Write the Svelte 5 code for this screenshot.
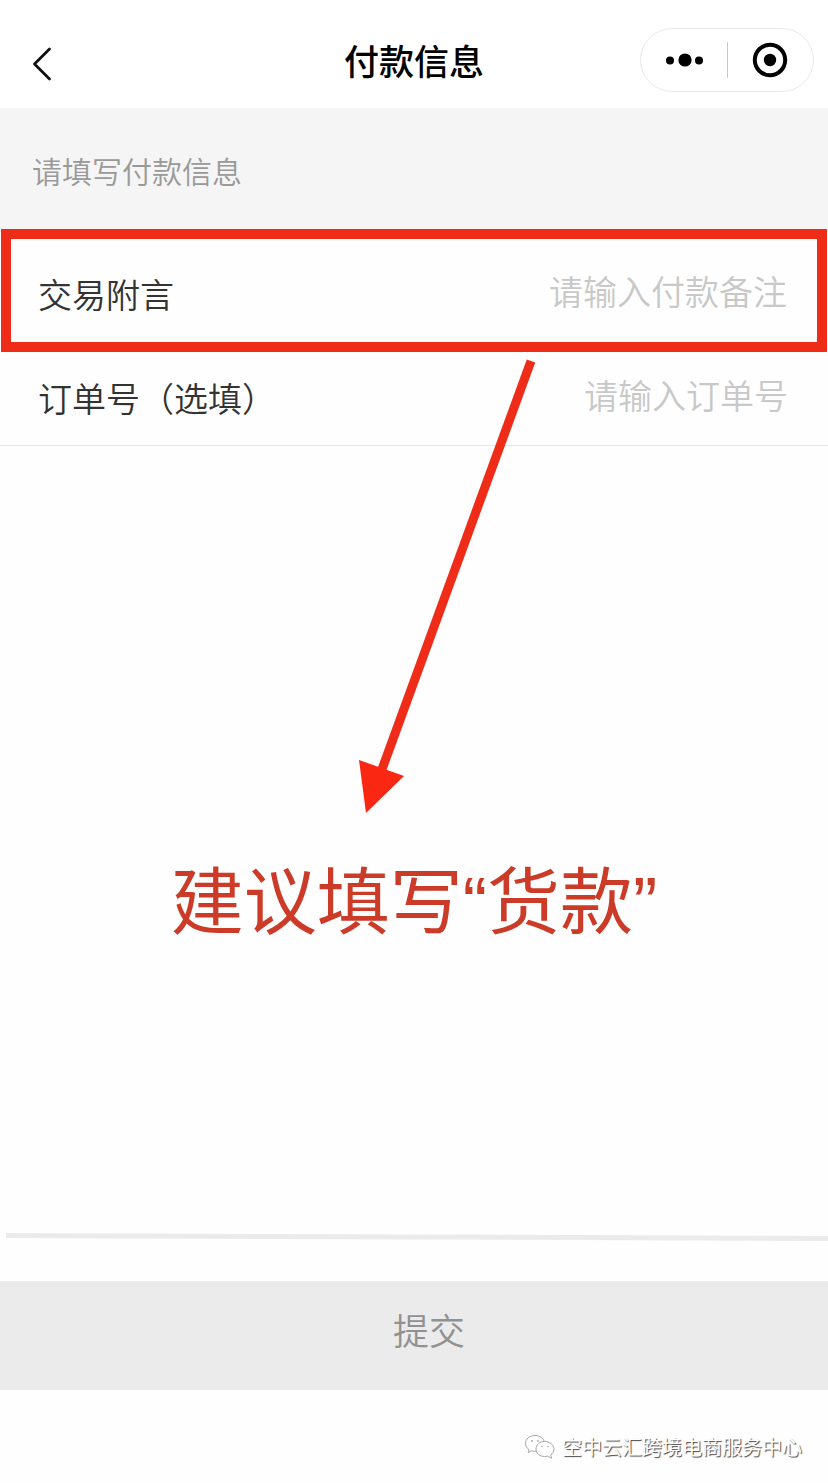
<!-- script -->
<script lang="ts">
  /* constants */
  const fields: { id: string, label: string, placeholder: string, marked: boolean }[] = [
    { id: 'remark', label: '交易附言', placeholder: '请输入付款备注', marked: true },
    { id: 'order', label: '订单号（选填）', placeholder: '请输入订单号', marked: false }
  ]
  /* state */
  let values: Record<string, string> = $state({ remark: '', order: '' })
</script>

<!-- template -->
<div class="page" lang="zh-CN">
  <header>
    <button class="back" type="button" aria-label="返回">
      <svg width="20" height="36" viewBox="0 0 20 36">
        <path d="M17.5 3L2.5 18L17.5 33" fill="none" stroke="#111" stroke-width="2.8" stroke-linecap="round" stroke-linejoin="round" />
      </svg>
    </button>
    <h1>付款信息</h1>
    <div class="capsule">
      <button type="button" aria-label="更多">
        <svg width="38" height="14" viewBox="0 0 38 14">
          <circle cx="5" cy="7.5" r="4" />
          <circle cx="20" cy="7" r="6.6" />
          <circle cx="34" cy="7.5" r="4" />
        </svg>
      </button>
      <span class="split"></span>
      <button type="button" aria-label="关闭">
        <svg width="36" height="36" viewBox="0 0 36 36">
          <circle cx="18" cy="18" r="15.2" fill="none" stroke="#000" stroke-width="4" />
          <circle cx="18" cy="18" r="6.2" />
        </svg>
      </button>
    </div>
  </header>

  <form>
    <p class="hint">请填写付款信息</p>
    {#each fields as field (field.id)}
      <div class="row" class:marked={field.marked}>
        <label for={field.id}>{field.label}</label>
        <input id={field.id} type="text" placeholder={field.placeholder} bind:value={values[field.id]} />
      </div>
    {/each}

    <div class="advice">
      <svg class="arrow" width="180" height="456" viewBox="0 0 180 456">
        <path d="M174 3L24 414" stroke="#ee2c18" stroke-width="9" />
        <path d="M2 402L47 418L9 455Z" fill="#fa2713" />
      </svg>
      <p>建议填写“货款”</p>
    </div>

    <svg class="rule" height="8" viewBox="0 0 822 8" preserveAspectRatio="none">
      <path d="M0 0L822 3V8L0 5Z" fill="#ebebeb" />
    </svg>
    <button class="submit" type="button">提交</button>
  </form>

  <footer>
    <svg width="32" height="26" viewBox="0 0 32 26" fill="#fff" stroke="#a8a8a8" stroke-width="1">
      <path d="M11 1.5C5.500 1.500 1.500 5 1.500 9.500C1.500 12 2.800 14.200 5 15.600L4.300 18.500L7.600 16.800C8.700 17.100 9.800 17.300 11 17.300C16.500 17.300 20.500 13.800 20.500 9.500C20.500 5 16.500 1.500 11 1.500Z" />
      <path d="M20.500 7.500C15.500 7.500 12 10.800 12 15C12 19.200 15.500 22.500 20.500 22.500C21.600 22.500 22.600 22.400 23.500 22.100L27.500 24.300L26.700 21C28.800 19.600 30 17.500 30 15C30 10.800 25.500 7.500 20.500 7.500Z" />
      <g fill="#a8a8a8" stroke="none">
        <circle cx="8" cy="7" r="0.9" />
        <circle cx="14" cy="7" r="0.9" />
        <circle cx="18" cy="12.500" r="0.8" />
        <circle cx="24" cy="12.500" r="0.8" />
      </g>
    </svg>
    <span>空中云汇跨境电商服务中心</span>
  </footer>
</div>

<!-- style -->
<style>
  :global(body) {
    margin: 0;
    background-color: #fff;
  }
  .page {
    /* flex */
    display: flex;
    flex-direction: column;
    /* size */
    min-height: 100vh;
    /* fonts */
    font-family: "Noto Sans CJK SC", sans-serif;
    /* color */
    background-color: #fefefe;
  }
  h1, p {
    margin: 0;
  }
  button {
    /* reset */
    padding: 0;
    border: none;
    background: none;
    font-family: inherit;
    /* flex */
    display: flex;
    align-items: center;
    justify-content: center;
  }
  header {
    /* grid */
    display: grid;
    grid-template-columns: 1fr auto 1fr;
    align-items: center;
    /* size */
    box-sizing: border-box;
    padding: 28px 14px 16px;
    /* color */
    background-color: #fff;
  }
  .back {
    justify-self: start;
    padding: 8px 18px 0;
  }
  h1 {
    /* fonts */
    font-size: 35px;
    line-height: 64px;
    font-weight: 500;
    /* color */
    color: #000;
  }
  .capsule {
    /* flex */
    display: flex;
    align-items: center;
    justify-self: end;
    /* size */
    box-sizing: border-box;
    width: 174px;
    height: 64px;
    /* color */
    border: 1px solid #e9e9e9;
    border-radius: 32px;
  }
  .capsule button {
    flex: 1;
  }
  .split {
    width: 1px;
    height: 36px;
    background-color: #c8c8c8;
  }
  form {
    /* flex */
    display: flex;
    flex-direction: column;
    flex: 1;
  }
  .hint {
    /* margins */
    padding: 40px 32px 37px;
    /* fonts */
    font-size: 30px;
    line-height: 44px;
    font-weight: 350;
    /* color */
    color: #999;
    background-color: #f5f5f5;
  }
  .row {
    /* flex */
    display: flex;
    align-items: center;
    justify-content: space-between;
    /* margins */
    padding: 20px 40px 25px 38px;
    /* color */
    border-bottom: 1px solid #e6e6e6;
  }
  .row.marked {
    /* margins */
    margin: 0 1px;
    padding: 29px 30px 26px 27px;
    /* color */
    border: 10px solid #ee2c18;
  }
  label {
    /* margins */
    padding-top: 4px;
    /* fonts */
    font-size: 34px;
    line-height: 44px;
    font-weight: 350;
    /* color */
    color: #333;
    white-space: nowrap;
  }
  input {
    /* size */
    box-sizing: border-box;
    flex: 1;
    min-width: 0;
    height: 48px;
    padding: 0 0 4px;
    /* fonts */
    font-family: inherit;
    font-size: 34px;
    font-weight: 350;
    text-align: right;
    /* color */
    color: #333;
    border: none;
    outline: none;
    background: none;
  }
  input::placeholder {
    color: #c8c8c8;
    opacity: 1;
  }
  .advice {
    /* position */
    position: relative;
    flex: 1;
    padding-top: 407px;
  }
  .advice p {
    /* fonts */
    font-family: "Liberation Sans", "Noto Sans CJK SC", sans-serif;
    font-size: 73px;
    line-height: 100px;
    text-align: center;
    /* color */
    color: #cc3a28;
  }
  .arrow {
    /* position */
    position: absolute;
    top: -88px;
    left: calc(50% - 57px);
  }
  .rule {
    width: calc(100% - 6px);
    margin-left: 6px;
  }
  .submit {
    /* margins */
    margin-top: 40px;
    padding: 22px 0 34px 30px;
    /* fonts */
    font-size: 36px;
    line-height: 53px;
    font-weight: 350;
    /* color */
    color: #919191;
    background-color: #ebebeb;
  }
  footer {
    /* flex */
    display: flex;
    align-items: center;
    justify-content: flex-end;
    column-gap: 6px;
    /* margins */
    padding: 42px 26px 21px;
    /* fonts */
    font-size: 20px;
    line-height: 30px;
    /* color */
    color: #fff;
    text-shadow: 1px 1px 1px #444;
  }
</style>
